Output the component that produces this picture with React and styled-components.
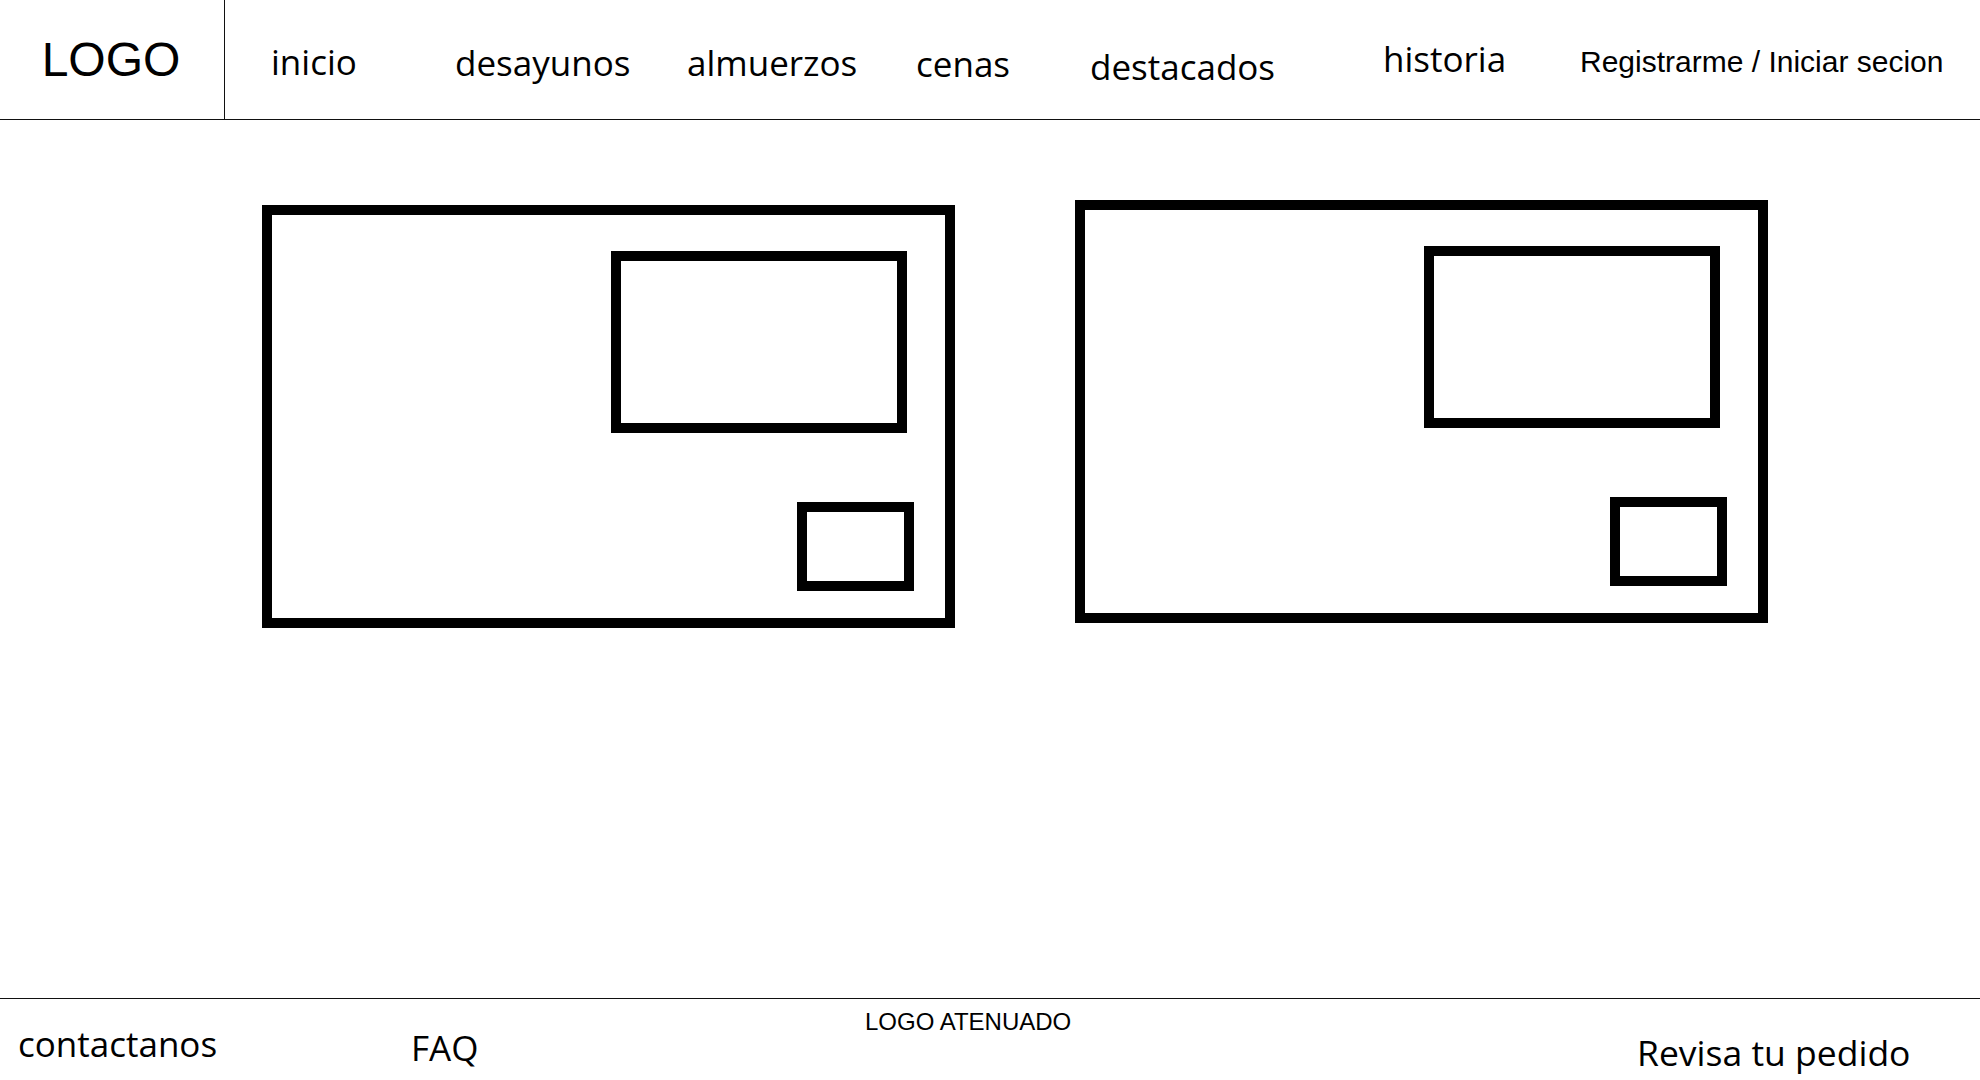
import React from "react";
import styled, { createGlobalStyle } from "styled-components";

const GlobalStyle = createGlobalStyle`
  html, body {
    margin: 0;
    padding: 0;
    background: #fff;
    overflow: hidden;
  }
  body {
    font-family: "Open Sans", "Noto Sans", sans-serif;
    color: #000;
  }
  * {
    box-sizing: border-box;
  }
`;

const Page = styled.div`
  width: 1980px;
  height: 1080px;
  display: flex;
  flex-direction: column;
`;

const Header = styled.header`
  height: 120px;
  display: flex;
  border-bottom: 1px solid #111;
`;
const LogoCell = styled.div`
  width: 225px;
  border-right: 1px solid #111;
  display: flex;
  justify-content: center;
  align-items: flex-start;
  padding-top: 36px;
  padding-right: 2px;
  font-family: "Liberation Sans", Arial, sans-serif;
  font-size: 48px;
  line-height: 1;
`;
const Nav = styled.nav`
  flex: 1;
  display: grid;
  grid-template-columns: 184px 232px 229px 174px 293px 197px auto;
  align-items: start;
  padding-left: 46px;
`;
const NavItem = styled.a`
  margin-top: ${(props) => props.$top}px;
  font-family: ${(props) =>
    props.$arial ? '"Liberation Sans", Arial, sans-serif' : '"Open Sans", sans-serif'};
  font-size: ${(props) => (props.$arial ? 30 : 35)}px;
  line-height: 1;
  white-space: nowrap;
  color: #000;
  text-decoration: none;
  cursor: pointer;
`;

const Main = styled.main`
  flex: 1;
  display: flex;
  align-items: flex-start;
  gap: 120px;
  padding: 80px 0 0 262px;
`;
const Card = styled.div`
  width: 693px;
  height: 423px;
  margin-top: ${(props) => props.$top || 0}px;
  border: 10px solid #000;
  display: flex;
  flex-direction: column;
  align-items: flex-end;
  padding: 36px 31px 0 0;
`;
const ImageBox = styled.div`
  width: 296px;
  height: 182px;
  margin-right: 7px;
  border: 10px solid #000;
`;
const ButtonBox = styled.div`
  width: 117px;
  height: 89px;
  margin-top: 69px;
  border: 10px solid #000;
`;

const Footer = styled.footer`
  height: 82px;
  border-top: 1px solid #111;
  display: grid;
  grid-template-columns: 393px 454px 772px auto;
  align-items: start;
  padding-left: 18px;
`;
const FooterItem = styled.a`
  margin-top: ${(props) => props.$top}px;
  font-family: ${(props) =>
    props.$arial ? '"Liberation Sans", Arial, sans-serif' : '"Open Sans", sans-serif'};
  font-size: ${(props) => props.$size}px;
  line-height: 1;
  white-space: nowrap;
  color: #000;
  text-decoration: none;
`;

const navLinks = [
  { label: "inicio", top: 44 },
  { label: "desayunos", top: 45 },
  { label: "almuerzos", top: 45 },
  { label: "cenas", top: 46 },
  { label: "destacados", top: 49 },
  { label: "historia", top: 41 },
  { label: "Registrarme / Iniciar secion", top: 47, arial: true },
];

const footerLinks = [
  { label: "contactanos", top: 27, size: 35 },
  { label: "FAQ", top: 31, size: 35 },
  { label: "LOGO ATENUADO", top: 11, size: 24, arial: true },
  { label: "Revisa tu pedido", top: 36, size: 35.5 },
];

const MealCard = ({ top }) => (
  <Card $top={top}>
    <ImageBox />
    <ButtonBox />
  </Card>
);

export default function App() {
  return (
    <>
      <GlobalStyle />
      <Page>
        <Header>
          <LogoCell>LOGO</LogoCell>
          <Nav>
            {navLinks.map((link) => (
              <NavItem key={link.label} $top={link.top} $arial={link.arial}>
                {link.label}
              </NavItem>
            ))}
          </Nav>
        </Header>

        <Main>
          <MealCard top={5} />
          <MealCard />
        </Main>

        <Footer>
          {footerLinks.map((link) => (
            <FooterItem key={link.label} $top={link.top} $size={link.size} $arial={link.arial}>
              {link.label}
            </FooterItem>
          ))}
        </Footer>
      </Page>
    </>
  );
}
